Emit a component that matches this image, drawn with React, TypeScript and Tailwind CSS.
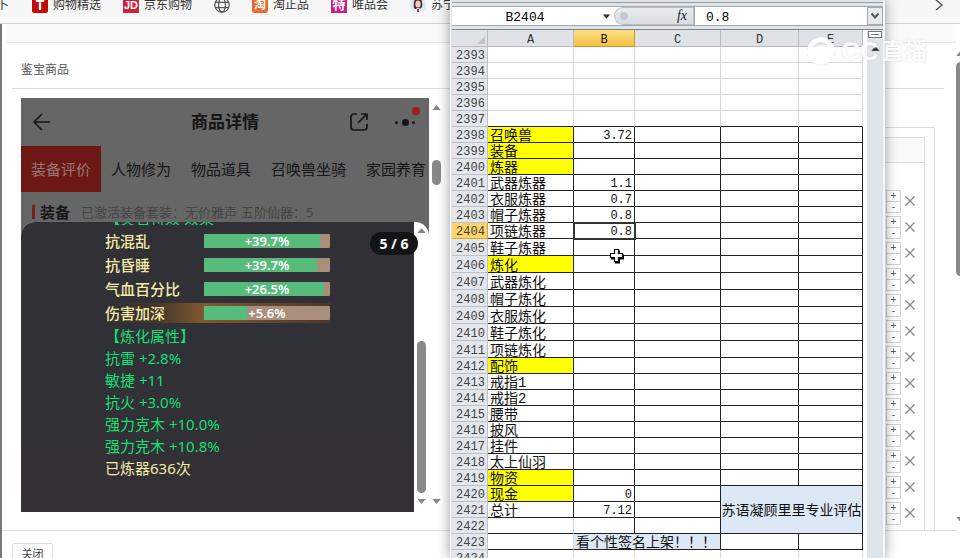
import React from "react";

const UI = "font-['Noto_Sans','Noto_Sans_CJK_SC',sans-serif]";
const SHEET = "font-['Liberation_Mono','Noto_Sans_CJK_SC',monospace]";

type Row = { n: number; a?: string; b?: string; yellow?: boolean; tall?: boolean };

const blankRows = [2393, 2394, 2395, 2396, 2397];

const rows: Row[] = [
  { n: 2398, a: "召唤兽", b: "3.72", yellow: true },
  { n: 2399, a: "装备", yellow: true },
  { n: 2400, a: "炼器", yellow: true },
  { n: 2401, a: "武器炼器", b: "1.1" },
  { n: 2402, a: "衣服炼器", b: "0.7" },
  { n: 2403, a: "帽子炼器", b: "0.8" },
  { n: 2404, a: "项链炼器", b: "0.8" },
  { n: 2405, a: "鞋子炼器", tall: true },
  { n: 2406, a: "炼化", yellow: true, tall: true },
  { n: 2407, a: "武器炼化", tall: true },
  { n: 2408, a: "帽子炼化", tall: true },
  { n: 2409, a: "衣服炼化", tall: true },
  { n: 2410, a: "鞋子炼化", tall: true },
  { n: 2411, a: "项链炼化", tall: true },
  { n: 2412, a: "配饰", yellow: true },
  { n: 2413, a: "戒指1" },
  { n: 2414, a: "戒指2" },
  { n: 2415, a: "腰带" },
  { n: 2416, a: "披风" },
  { n: 2417, a: "挂件" },
  { n: 2418, a: "太上仙羽" },
  { n: 2419, a: "物资", yellow: true },
  { n: 2420, a: "现金", b: "0", yellow: true },
  { n: 2421, a: "总计", b: "7.12" },
];

const stats = [
  { name: "抗混乱", value: "+39.7%", fill: 92 },
  { name: "抗昏睡", value: "+39.7%", fill: 90 },
  { name: "气血百分比", value: "+26.5%", fill: 95 },
  { name: "伤害加深", value: "+5.6%", fill: 34, glow: true },
];

const refined = ["抗雷 +2.8%", "敏捷 +11", "抗火 +3.0%", "强力克木 +10.0%", "强力克木 +10.8%"];

function Triangle({ dir, className = "" }: { dir: "up" | "down"; className?: string }) {
  return (
    <svg viewBox="0 0 10 6" className={`h-[5px] w-[9px] shrink-0 ${className}`} fill="currentColor" aria-hidden="true">
      <path d={dir === "up" ? "M0 6 5 0 10 6z" : "M0 0 5 6 10 0z"} />
    </svg>
  );
}

function Bookmark({ icon, label }: { icon: React.ReactNode; label?: string }) {
  return (
    <a href="#" className="flex shrink-0 items-center gap-[5px] text-xs text-[#333]">
      {icon}
      {label}
    </a>
  );
}

function BookmarkBar() {
  return (
    <nav className="flex h-[24px] shrink-0 items-center border-b border-[#d4d4d4] bg-[#f7f7f7] pb-[13px]">
      <span className="-ml-[3px] w-[35px] shrink-0 text-xs text-[#333]">卜</span>
      <div className="flex items-center gap-[22px]">
        <Bookmark
          label="购物精选"
          icon={
            <span className="flex h-4 w-4 items-center justify-center rounded-[2px] bg-[#c00a0a] font-['Liberation_Sans',sans-serif] text-sm font-bold text-white">
              T
            </span>
          }
        />
        <Bookmark
          label="京东购物"
          icon={
            <span className="flex h-4 w-4 items-center justify-center bg-[#d5203a] font-['Liberation_Sans',sans-serif] text-[11px] font-bold text-white">
              JD
            </span>
          }
        />
        <Bookmark
          icon={
            <svg viewBox="0 0 16 16" className="h-4 w-4" fill="none" stroke="#555" strokeWidth="1.2" aria-label="网址">
              <circle cx="8" cy="8" r="7.2" />
              <ellipse cx="8" cy="8" rx="3.4" ry="7.2" />
              <path d="M1.5 5.3h13M1.5 10.7h13" />
            </svg>
          }
        />
        <Bookmark
          label="淘正品"
          icon={
            <span className="flex h-4 w-4 items-center justify-center rounded-[3px] bg-[#f0672e] text-xs font-bold text-white">
              淘
            </span>
          }
        />
        <Bookmark
          label="唯品会"
          icon={
            <span className="flex h-4 w-4 items-center justify-center bg-[#cf1a86] text-[13px] font-bold text-white">
              特
            </span>
          }
        />
        <Bookmark
          label="苏宁"
          icon={
            <svg viewBox="0 0 16 16" className="h-4 w-4" aria-hidden="true">
              <circle cx="8" cy="8" r="8" fill="#dbe9f6" />
              <path d="M4 11C3 4 5 1 8 1s5 3 4 9l-2 2H5z" fill="#4a2c2a" />
              <ellipse cx="8" cy="7" rx="2.7" ry="3.6" fill="#f3cdbb" />
              <path d="M4.500 15c.5-3 2-4 3.500-4s3 1 3.500 4c-2 1.300-5 1.300-7 0z" fill="#fff" />
              <path d="M7 12h2v3H7z" fill="#b5322f" />
            </svg>
          }
        />
      </div>
      <svg viewBox="0 0 10 12" className="mr-4 ml-auto h-3 w-[10px]" fill="none" stroke="#555" strokeWidth="1.5" aria-hidden="true">
        <path d="M2 1l6 5-6 5" />
      </svg>
    </nav>
  );
}

function PhoneHeader() {
  const tabs = ["人物修为", "物品道具", "召唤兽坐骑", "家园养育"];
  return (
    <div className="bg-[#666] pb-[14px] text-[#161616]">
      <div className="grid h-12 grid-cols-[1fr_auto_1fr] items-center px-[11px]">
        <button aria-label="返回" className="w-5">
          <svg viewBox="0 0 20 20" className="h-5 w-5" fill="none" stroke="currentColor" strokeWidth="1.6">
            <path d="M10 2 2 10l8 8M2 10h16" />
          </svg>
        </button>
        <h2 className="text-[17px] font-bold">商品详情</h2>
        <div className="flex items-center justify-end gap-[26px]">
          <button aria-label="分享">
            <svg viewBox="0 0 20 20" className="h-5 w-5" fill="none" stroke="currentColor" strokeWidth="1.7">
              <path d="M8 2H5a3 3 0 0 0-3 3v10a3 3 0 0 0 3 3h10a3 3 0 0 0 3-3v-3M12 2h6v6M18 2l-9 9" />
            </svg>
          </button>
          <button aria-label="更多" className="relative mr-[3px] flex h-5 w-[20px] items-center justify-between">
            <i className="h-[3px] w-[3px] rounded-full bg-current" />
            <i className="h-[7px] w-[7px] rounded-full bg-current" />
            <i className="h-[3px] w-[3px] rounded-full bg-current" />
            <i className="absolute -top-[5px] -right-[5px] h-2 w-2 rounded-full bg-[#9c1c2a]" />
          </button>
        </div>
      </div>
      <div className="flex h-[46px] text-[15px]">
        <button className="bg-[#6d1815] px-[10px] whitespace-nowrap text-[#9a7775]">装备评价</button>
        {tabs.map((t) => (
          <button key={t} className="px-[10px] whitespace-nowrap">
            {t}
          </button>
        ))}
      </div>
      <div className="flex h-[30px] items-center gap-[11px] pt-[9px] pl-[11px] text-[#444]">
        <h3 className="border-l-[3px] border-[#7d1d1d] pl-[5px] text-[15px] leading-[14px] font-bold text-[#161616]">装备</h3>
        <span className="text-[13px] leading-[14px]">已激活装备套装：无价雅声</span>
        <span className="-ml-[7px] text-[13px] leading-[14px]">五阶仙器：5</span>
      </div>
    </div>
  );
}

function StatPanel() {
  return (
    <div className="relative -mt-[14px] flex h-[290px] overflow-hidden rounded-t-[14px] bg-white">
      <div className="flex-1 bg-gradient-to-b from-[#313036] via-[#303136] to-[#343035] pl-[84px]">
        <div className="flex h-[3px] items-end overflow-hidden text-[15px] text-[#1fd873]">
          <span className="leading-[14px]">【灵石特效 效果</span>
        </div>
        <dl className="pt-1 text-[15px] font-medium text-[#f2eaa6]">
          {stats.map((s) => (
            <div key={s.name} className="flex h-6 items-center">
              <dt
                className={
                  s.glow
                    ? "flex h-5 w-[99px] items-center bg-gradient-to-r from-[#323035] via-[#43352a] to-[#80592c]"
                    : "w-[99px]"
                }
              >
                {s.name}
              </dt>
              <dd
                className={
                  s.glow
                    ? "flex h-5 w-[126px] items-center bg-gradient-to-r from-[#80592c] to-[#4a382c]"
                    : "flex h-5 w-[126px] items-center"
                }
              >
                <div className="grid h-[14px] w-full overflow-hidden rounded-[1px] bg-[#a98f7b]">
                  <div className="col-start-1 row-start-1 bg-[#57bb7b]" style={{ width: `${s.fill}%` }} />
                  <span className="col-start-1 row-start-1 text-center text-[13px] leading-[14px] font-semibold text-white">
                    {s.value}
                  </span>
                </div>
              </dd>
            </div>
          ))}
        </dl>
        <div className="text-[15px] leading-[22px] text-[#16df75]">
          <p>【炼化属性】</p>
          {refined.map((r) => (
            <p key={r}>{r}</p>
          ))}
          <p className="text-[#f2eaa6]">已炼器636次</p>
        </div>
      </div>
      <div className="flex w-[15px] flex-col items-center pt-[6px] pb-2 text-[#888]">
        <Triangle dir="up" />
        <div className="mt-auto mb-[6px] h-[152px] w-[9px] rounded-full bg-[#888]" />
        <Triangle dir="down" />
      </div>
      <span className="absolute top-[10px] left-[349px] flex h-[23px] w-12 items-center justify-center rounded-full bg-[#141416] font-['Open_Sans',sans-serif] text-[14px] font-bold whitespace-pre text-white">
        5 / 6
      </span>
    </div>
  );
}

function QuantityRows() {
  return (
    <div className="mt-[38px] mr-[21px] ml-auto w-[70px] border-t border-r border-[#ddd] pt-[9px] pr-[9px]">
      <div className="h-full border-t border-r border-[#ddd]">
        <div className="h-[25px] border-b border-[#ddd] bg-[#f8f9f9]" />
        <ul className="pt-[25px]">
          {Array.from({ length: 13 }, (_, i) => (
            <li key={i} className="flex h-[26px] items-center justify-end gap-[3px] pr-2">
              <div className="flex h-[23px] w-[15px] flex-col border border-[#d2d2d2] font-['Liberation_Sans',sans-serif] text-[10px] leading-[10px] text-[#555]">
                <button aria-label="增加" className="flex-1 border-b border-[#d2d2d2]">+</button>
                <button aria-label="减少" className="flex-1">-</button>
              </div>
              <button aria-label="删除">
                <svg viewBox="0 0 12 12" className="h-3 w-3" stroke="#888" strokeWidth="1.3">
                  <path d="M1.5 1.5l9 9M10.5 1.5l-9 9" />
                </svg>
              </button>
            </li>
          ))}
        </ul>
      </div>
    </div>
  );
}

function BrowserPage() {
  return (
    <div className="flex h-screen flex-col bg-white">
      <BookmarkBar />
      <div className="flex min-h-0 flex-1">
        <div className="w-[2px] bg-[#777]" />
        <main className="flex min-w-0 flex-1 flex-col">
          <div className="ml-[5px] h-[19px] shrink-0 border-b border-[#e4e4e4] bg-[#fafafa]" />
          <h1 className="mr-3 ml-[10px] flex h-[46px] shrink-0 items-center border-b border-[#ddd] pt-2 pl-[9px] text-xs text-[#555]">
            鉴宝商品
          </h1>
          <section className="flex h-[442px] shrink-0 overflow-hidden border-b border-[#e0e0e0]">
            <div className="mt-[9px] ml-[19px] w-[408px] shrink-0">
              <PhoneHeader />
              <StatPanel />
            </div>
            <div className="flex w-[15px] flex-col items-center pt-4 pb-[26px] text-[#888]">
              <Triangle dir="up" />
              <div className="mt-[50px] mb-auto h-[25px] w-[9px] rounded-full bg-[#888]" />
              <Triangle dir="down" />
            </div>
            <QuantityRows />
          </section>
          <footer className="px-[10px] pt-[9px]">
            <button className="h-[22px] w-[41px] rounded-[2px] border border-[#ddd] text-[11px] leading-[14px] text-[#444]">关闭</button>
          </footer>
        </main>
        <div className="flex w-[4px] flex-col items-start overflow-hidden pt-[27px] pb-9 text-[#888]">
          <Triangle dir="up" />
          <div className="mt-[6px] mb-auto h-[214px] w-[9px] rounded-full bg-[#888]" />
          <Triangle dir="down" />
        </div>
      </div>
    </div>
  );
}

const head = "border-r border-b border-[#b4bac0] bg-[#dfe3e8] p-0 pt-1 font-normal text-[#333]";
const rowHead = "border-r border-b border-[#bcc2c8] bg-[#e3e7eb] p-0 pt-1 pl-[2px] text-center font-normal text-[#444]";
const rowHeadActive =
  "border-r border-b border-[#d9a136] bg-[#fbd46b] p-0 pt-1 pl-[2px] text-center font-normal text-[#444]";
const light = "border-r border-b border-[#d5d9dd] p-0";
const lightEdge = "border-r border-b border-r-[#d5d9dd] border-b-[#222] p-0";
const dark = "border-r border-b border-[#222] p-0";

function Sheet() {
  return (
    <table className="w-[411px] table-fixed border-separate border-spacing-0 text-[12px] leading-[11px] text-[#111]">
      <colgroup>
        <col className="w-[36px]" />
        <col className="w-[86px]" />
        <col className="w-[61px]" />
        <col className="w-[86px]" />
        <col className="w-[78px]" />
        <col className="w-[64px]" />
      </colgroup>
      <thead>
        <tr className="h-[17px]">
          <th className={head}>
            <svg viewBox="0 0 10 10" className="ml-auto h-2 w-3" fill="#bfc5ca" aria-label="全选">
              <path d="M10 0v10H0z" />
            </svg>
          </th>
          <th className={head}>A</th>
          <th className="border-r border-b border-[#c9952c] bg-gradient-to-b from-[#fbdf83] to-[#f5c342] p-0 pt-1 font-normal">B</th>
          <th className={head}>C</th>
          <th className={head}>D</th>
          <th className={head}>E</th>
        </tr>
      </thead>
      <tbody>
        {blankRows.map((n) => {
          const cell = n === 2397 ? lightEdge : light;
          return (
            <tr key={n} className="h-4">
              <th className={rowHead}>{n}</th>
              <td className={cell} />
              <td className={cell} />
              <td className={cell} />
              <td className={cell} />
              <td className={cell} />
            </tr>
          );
        })}
        {rows.map((r) => (
          <tr key={r.n} className={r.tall ? "h-[17px]" : "h-4"}>
            <th className={r.n === 2404 ? rowHeadActive : rowHead}>{r.n}</th>
            <td
              className={`${dark} pt-1 pl-[2px] text-[14px] leading-[11px] whitespace-nowrap ${r.yellow ? "bg-[#ffff00]" : ""}`}
            >
              {r.a}
            </td>
            <td
              className={`${dark} pt-1 pr-[2px] text-right ${r.n === 2404 ? "outline-2 -outline-offset-1 outline-[#333]" : ""}`}
            >
              {r.b}
            </td>
            <td className={dark} />
            {r.n < 2420 && <td className={dark} />}
            {r.n < 2420 && <td className={dark} />}
            {r.n === 2420 && (
              <td
                colSpan={2}
                rowSpan={3}
                className={`${dark} bg-[#dce8f5] pt-1 text-center align-middle text-[14px] leading-[11px] whitespace-nowrap`}
              >
                苏语凝顾里里专业评估
              </td>
            )}
          </tr>
        ))}
        <tr className="h-4">
          <th className={rowHead}>2422</th>
          <td className={lightEdge} />
          <td className={dark} />
          <td className={dark} />
        </tr>
        <tr className="h-4">
          <th className={rowHead}>2423</th>
          <td className={lightEdge} />
          <td colSpan={2} className={`${dark} bg-[#dce8f5] pt-1 pl-[2px] text-[14px] leading-[11px] whitespace-nowrap`}>
            看个性签名上架！！！
          </td>
          <td className={dark} />
          <td className={dark} />
        </tr>
        <tr className="h-4">
          <th className={rowHead}>2424</th>
          <td className={light} />
          <td className={light} />
          <td className={light} />
          <td className={light} />
          <td className={light} />
        </tr>
      </tbody>
    </table>
  );
}

function SpreadsheetWindow() {
  return (
    <div
      className={`absolute top-0 left-[450px] flex h-full w-[435px] flex-col overflow-hidden border-r-2 border-l border-[#f4f6f7] bg-[#dfe4e8] pl-px shadow-[0_0_12px_rgba(0,0,0,0.4)] ${SHEET}`}
    >
      <div className="h-[3px] shrink-0 border-b border-[#9aa0a6]" />
      <div className="mt-[3px] flex h-5 shrink-0 border-y border-[#a3a9af] bg-white text-[13px] text-black">
        <input aria-label="名称框" defaultValue="B2404" className="w-[146px] pt-[3px] text-center outline-none" />
        <button aria-label="名称列表" className="flex w-[16px] items-center justify-center text-[#333]">
          <Triangle dir="down" className="scale-90" />
        </button>
        <div className="flex w-[80px] items-center justify-between rounded-l-full border border-[#b8bec4] bg-gradient-to-b from-[#e9ecef] to-[#d8dde2] pr-[6px] pl-[5px]">
          <span className="h-2 w-2 rounded-full bg-[#c3c9ce]" />
          <button aria-label="插入函数" className="font-['Liberation_Serif',serif] text-[14px] leading-[16px] text-[#222] italic">
            fx
          </button>
        </div>
        <input
          aria-label="编辑栏"
          defaultValue="0.8"
          className="min-w-0 flex-1 border-l border-[#a3a9af] pt-[3px] pl-[11px] outline-none"
        />
        <button aria-label="展开编辑栏" className="flex w-4 items-center justify-center border border-[#a3a9af] bg-[#e6eaed] text-[#555]">
          <svg viewBox="0 0 10 8" className="h-2 w-[10px]" fill="none" stroke="currentColor" strokeWidth="2">
            <path d="M1.5 1.5 5 5.5l3.5-4" />
          </svg>
        </button>
      </div>
      <div className="mt-[3px] flex min-h-0 flex-1 border-t border-[#7f868c] bg-white">
        <Sheet />
        <div className="ml-auto flex w-4 flex-col items-center bg-[#dfe4e8] pt-px">
          <div className="flex h-[7px] w-[14px] items-center justify-center border border-[#777] bg-white">
            <i className="h-px w-2 bg-[#777]" />
          </div>
          <Triangle dir="up" className="mt-2 text-[#444]" />
        </div>
      </div>
    </div>
  );
}

export default function App() {
  return (
    <div className={`relative h-screen overflow-hidden bg-white ${UI}`}>
      <BrowserPage />
      <SpreadsheetWindow />
      <svg viewBox="0 0 16 16" className="absolute top-[248px] left-[609px] h-4 w-4" aria-hidden="true">
        <path d="M6 2.5h5v4h4v5h-4v4H6v-4H2v-5h4z" fill="#000" />
        <path d="M5.500 1.500h4v4h4v4h-4v4h-4v-4h-4v-4h4z" fill="#fff" stroke="#000" strokeWidth="1.2" />
      </svg>
      <div className="absolute top-[35px] left-[804px] flex h-8 items-center gap-[3px] font-['Liberation_Sans','Noto_Sans_CJK_SC',sans-serif] text-[26px] font-bold text-white/90 [text-shadow:0_0_2px_rgba(120,130,140,0.3)]">
        <svg viewBox="0 0 34 34" className="h-8 w-[34px]" fill="none" stroke="#fff" strokeOpacity="0.9" aria-hidden="true">
          <circle cx="17" cy="17" r="15" stroke="#d5d8dc" strokeOpacity="0.5" strokeWidth="1" />
          <circle cx="17" cy="17" r="12" strokeWidth="5" />
          <path d="M1 19c7-8 24-9 32-3M11 18c3 4 9 4 12 0" strokeWidth="2.5" />
        </svg>
        <span>CC</span>
        <span className="text-[23px]">直播</span>
      </div>
    </div>
  );
}
